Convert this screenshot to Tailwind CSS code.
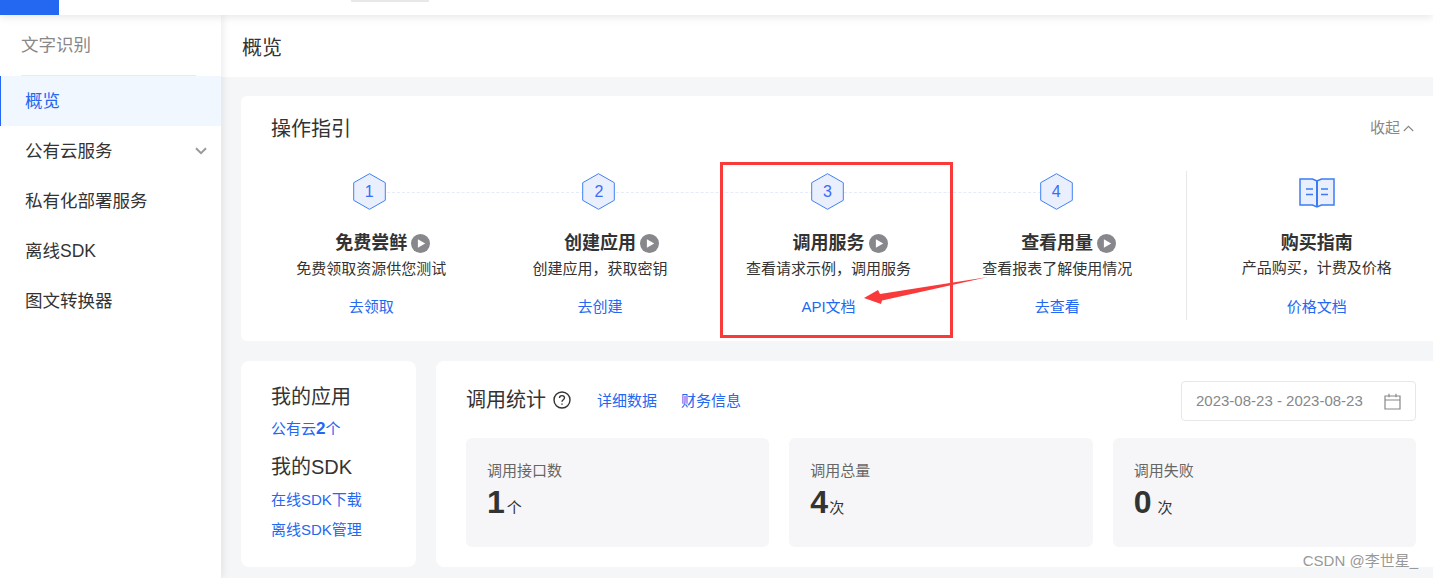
<!DOCTYPE html>
<html>
  <head>
    <meta charset="UTF-8" />
    <script src="https://cdn.jsdelivr.net/npm/@tailwindcss/browser@4"></script>
  </head>
  <body class="relative h-screen overflow-hidden flex flex-col bg-[#f5f6f8] text-[#333] font-['Liberation_Sans','Noto_Sans_CJK_SC',sans-serif]">
    <!-- top nav -->
    <div class="relative z-20 h-[15px] shrink-0 bg-white shadow-[0_2px_8px_rgba(0,0,0,0.1)]">
      <div class="flex items-start">
        <div class="w-[59px] h-[15px] bg-[#2468f2]"></div>
        <div class="ml-[292px] w-[78px] h-[2px] bg-[#e8e8e8]"></div>
      </div>
    </div>

    <div class="flex flex-1 min-h-0">
      <!-- sidebar -->
      <aside class="relative z-10 w-[221px] shrink-0 bg-white shadow-[2px_0_8px_rgba(0,0,0,0.08)]">
        <div class="mx-[21px] mr-[25px] h-[61px] border-b border-[#e8ecf2] text-[17.5px] leading-[60px] text-[#888]">文字识别</div>
        <nav class="text-[17.5px]">
          <div class="h-[50px] leading-[50px] pl-[24px] border-l border-[#2468f2] bg-[#f0f7ff] text-[#2468f2]">概览</div>
          <div class="h-[50px] leading-[50px] pl-[25px] pr-[14px] flex items-center justify-between">
            <span>公有云服务</span>
            <svg class="w-[12px] h-[8px] text-[#999]" viewBox="0 0 12 8" fill="none" stroke="currentColor" stroke-width="2"><path d="M1 1.2l5 5 5-5" /></svg>
          </div>
          <div class="h-[50px] leading-[50px] pl-[25px]">私有化部署服务</div>
          <div class="h-[50px] leading-[50px] pl-[25px]">离线SDK</div>
          <div class="h-[50px] leading-[50px] pl-[25px]">图文转换器</div>
        </nav>
      </aside>

      <main class="flex-1 min-w-0 overflow-hidden">
        <div class="h-[62px] bg-white pl-[21px] text-[20px] leading-[66px]">概览</div>

        <div class="w-[1205px] ml-[20px] mt-[19px]">
          <!-- guide card -->
          <section class="h-[245px] bg-white rounded-[6px] relative">
            <div class="flex items-center justify-between pl-[30px] pr-[32px] pt-[19px] h-[46px]">
              <h2 class="text-[20px] leading-[28px]">操作指引</h2>
              <div class="flex items-center text-[15px] text-[#888] -mt-[1px]">
                收起
                <svg class="ml-[3px] w-[11px] h-[7px]" viewBox="0 0 11 7" fill="none" stroke="currentColor" stroke-width="1.1"><path d="M.8 6l4.700-4.700L10.200 6" /></svg>
              </div>
            </div>

            <div class="flex pl-[16px] pt-[31px]">
              <!-- step 1 -->
              <div class="relative w-[229px] flex flex-col items-center">
                <div class="absolute left-[130px] top-[19px] w-[197px] border-t border-dashed border-[#e6ebfb]"></div>
                <div class="relative w-[33px] h-[37px] mr-[4px] flex items-center justify-center text-[16px] text-[#3b6cf6]">
                  <svg class="absolute inset-0" viewBox="0 0 33 37" fill="#e9effd" stroke="#4080f5" stroke-width="1"><path d="M16.500.7L32.300 9.700V27.300L16.500 36.300L.7 27.300V9.700Z" /></svg>
                  <span class="relative">1</span>
                </div>
                <div class="relative mt-[21px] text-[18px] leading-[24px] font-bold">
                  免费尝鲜
                  <svg class="absolute left-[76px] top-[3px] w-[19px] h-[19px]" viewBox="0 0 18 18"><circle cx="9" cy="9" r="9" fill="#87878c" /><path d="M6.500 5l7 4-7 4z" fill="#fff" /></svg>
                </div>
                <p class="mt-[2px] text-[15px] leading-[24px]">免费领取资源供您测试</p>
                <a class="mt-[14px] text-[15px] leading-[24px] text-[#2468f2]">去领取</a>
              </div>
              <!-- step 2 -->
              <div class="relative w-[229px] flex flex-col items-center">
                <div class="absolute left-[130px] top-[19px] w-[197px] border-t border-dashed border-[#e6ebfb]"></div>
                <div class="relative w-[33px] h-[37px] mr-[2px] flex items-center justify-center text-[16px] text-[#3b6cf6]">
                  <svg class="absolute inset-0" viewBox="0 0 33 37" fill="#e9effd" stroke="#4080f5" stroke-width="1"><path d="M16.500.7L32.300 9.700V27.300L16.500 36.300L.7 27.300V9.700Z" /></svg>
                  <span class="relative">2</span>
                </div>
                <div class="relative mt-[21px] text-[18px] leading-[24px] font-bold">
                  创建应用
                  <svg class="absolute left-[76px] top-[3px] w-[19px] h-[19px]" viewBox="0 0 18 18"><circle cx="9" cy="9" r="9" fill="#87878c" /><path d="M6.500 5l7 4-7 4z" fill="#fff" /></svg>
                </div>
                <p class="mt-[2px] text-[15px] leading-[24px]">创建应用，获取密钥</p>
                <a class="mt-[14px] text-[15px] leading-[24px] text-[#2468f2]">去创建</a>
              </div>
              <!-- step 3 -->
              <div class="relative w-[229px] flex flex-col items-center">
                <div class="absolute left-[130px] top-[19px] w-[197px] border-t border-dashed border-[#e6ebfb]"></div>
                <div class="relative w-[33px] h-[37px] mr-[2px] flex items-center justify-center text-[16px] text-[#3b6cf6]">
                  <svg class="absolute inset-0" viewBox="0 0 33 37" fill="#e9effd" stroke="#4080f5" stroke-width="1"><path d="M16.500.7L32.300 9.700V27.300L16.500 36.300L.7 27.300V9.700Z" /></svg>
                  <span class="relative">3</span>
                </div>
                <div class="relative mt-[21px] text-[18px] leading-[24px] font-bold">
                  调用服务
                  <svg class="absolute left-[76px] top-[3px] w-[19px] h-[19px]" viewBox="0 0 18 18"><circle cx="9" cy="9" r="9" fill="#87878c" /><path d="M6.500 5l7 4-7 4z" fill="#fff" /></svg>
                </div>
                <p class="mt-[2px] text-[15px] leading-[24px]">查看请求示例，调用服务</p>
                <a class="mt-[14px] text-[15px] leading-[24px] text-[#2468f2]">API文档</a>
              </div>
              <!-- step 4 -->
              <div class="relative w-[229px] flex flex-col items-center">
                <div class="relative w-[33px] h-[37px] mr-[2px] flex items-center justify-center text-[16px] text-[#3b6cf6]">
                  <svg class="absolute inset-0" viewBox="0 0 33 37" fill="#e9effd" stroke="#4080f5" stroke-width="1"><path d="M16.500.7L32.300 9.700V27.300L16.500 36.300L.7 27.300V9.700Z" /></svg>
                  <span class="relative">4</span>
                </div>
                <div class="relative mt-[21px] text-[18px] leading-[24px] font-bold">
                  查看用量
                  <svg class="absolute left-[76px] top-[3px] w-[19px] h-[19px]" viewBox="0 0 18 18"><circle cx="9" cy="9" r="9" fill="#87878c" /><path d="M6.500 5l7 4-7 4z" fill="#fff" /></svg>
                </div>
                <p class="mt-[2px] text-[15px] leading-[24px]">查看报表了解使用情况</p>
                <a class="mt-[14px] text-[15px] leading-[24px] text-[#2468f2]">去查看</a>
              </div>
              <!-- buy guide -->
              <div class="ml-[15px] w-[260px] h-[149px] -mt-[2px] border-l border-[#e8e8e8] flex flex-col items-center">
                <svg class="mt-[7px] w-[36px] h-[30px]" viewBox="0 0 36 30" fill="#e9effd" stroke="#3b7cf5" stroke-width="1.500">
                  <path d="M1 1H13.500L18 3L22.500 1H35V27H22.500L18 29L13.500 27H1Z" />
                  <path d="M18 3V29" fill="none" stroke-width="2" />
                  <path d="M7 11h7M7 16.500h7M22 11h7M22 16.500h7" fill="none" />
                </svg>
                <div class="mt-[23px] text-[18px] leading-[24px] font-bold">购买指南</div>
                <p class="mt-[1px] text-[15px] leading-[24px]">产品购买，计费及价格</p>
                <a class="mt-[15px] text-[15px] leading-[24px] text-[#2468f2]">价格文档</a>
              </div>
            </div>
          </section>

          <!-- bottom row -->
          <div class="flex gap-[20px] mt-[20px]">
            <section class="w-[175px] h-[206px] shrink-0 bg-white rounded-[8px] pl-[30px] pt-[23px]">
              <h3 class="text-[20px] leading-[26px]">我的应用</h3>
              <a class="block mt-[7px] text-[15px] leading-[24px] text-[#2468f2]">公有云<b class="text-[17px]">2</b>个</a>
              <h3 class="mt-[13px] text-[20px] leading-[26px]">我的SDK</h3>
              <a class="block mt-[5px] text-[15px] leading-[30px] text-[#2468f2]">在线SDK下载</a>
              <a class="block text-[15px] leading-[30px] text-[#2468f2]">离线SDK管理</a>
            </section>

            <section class="flex-1 h-[206px] bg-white rounded-[8px] px-[30px] pt-[20px]">
              <div class="flex items-center h-[40px]">
                <h3 class="text-[20px] -mt-[2px]">调用统计</h3>
                <svg class="ml-[7px] -mt-[2px] w-[18px] h-[18px] text-[#333]" viewBox="0 0 18 18" fill="none" stroke="currentColor" stroke-width="1.400">
                  <circle cx="9" cy="9" r="8" />
                  <path d="M6.500 7c0-1.500 1.100-2.400 2.500-2.400s2.500.9 2.500 2.200c0 1.900-2.500 1.900-2.500 3.900" />
                  <path d="M9 12.400v1.400" />
                </svg>
                <a class="ml-[26px] text-[15px] text-[#2468f2]">详细数据</a>
                <a class="ml-[24px] text-[15px] text-[#2468f2]">财务信息</a>
                <div class="ml-auto w-[235px] h-[40px] border border-[#e6e7ea] rounded-[4px] flex items-center justify-between pl-[14px] pr-[14px] text-[15px] text-[#888]">
                  <span>2023-08-23 - 2023-08-23</span>
                  <svg class="w-[17px] h-[17px]" viewBox="0 0 17 17" fill="none" stroke="currentColor" stroke-width="1.200">
                    <path d="M1 3h15v13H1zM1 7h15M5 .8v3.400M12 .8v3.400" />
                  </svg>
                </div>
              </div>
              <div class="grid grid-cols-3 gap-[20px] mt-[17px]">
                <div class="h-[109px] rounded-[6px] bg-[#f6f6f8] pl-[21px] pt-[21px]">
                  <div class="text-[15px] leading-[24px] text-[#666]">调用接口数</div>
                  <div class="flex items-baseline leading-[38px]">
                    <span class="text-[32px] font-bold">1</span><span class="ml-[2px] text-[15px]">个</span>
                  </div>
                </div>
                <div class="h-[109px] rounded-[6px] bg-[#f6f6f8] pl-[21px] pt-[21px]">
                  <div class="text-[15px] leading-[24px] text-[#666]">调用总量</div>
                  <div class="flex items-baseline leading-[38px]">
                    <span class="text-[32px] font-bold">4</span><span class="ml-[1px] text-[15px]">次</span>
                  </div>
                </div>
                <div class="h-[109px] rounded-[6px] bg-[#f6f6f8] pl-[21px] pt-[21px]">
                  <div class="text-[15px] leading-[24px] text-[#666]">调用失败</div>
                  <div class="flex items-baseline leading-[38px]">
                    <span class="text-[32px] font-bold">0</span><span class="ml-[6px] text-[15px]">次</span>
                  </div>
                </div>
              </div>
            </section>
          </div>
        </div>
      </main>
    </div>

    <!-- screenshot annotation -->
    <div class="absolute left-[720px] top-[162px] w-[233px] h-[176px] border-[3px] border-[#f93a3a] z-30"></div>
    <svg class="absolute left-[860px] top-[270px] z-30" width="130" height="40" viewBox="0 0 130 40">
      <path d="M4 28L18 20L20 24L128 7L22 30.500L21 34Z" fill="#f93a3a" />
    </svg>
    <div class="absolute right-[15px] top-[551px] z-30 text-[15px] leading-[20px] text-[#999]">CSDN @李世星_</div>
  </body>
</html>
